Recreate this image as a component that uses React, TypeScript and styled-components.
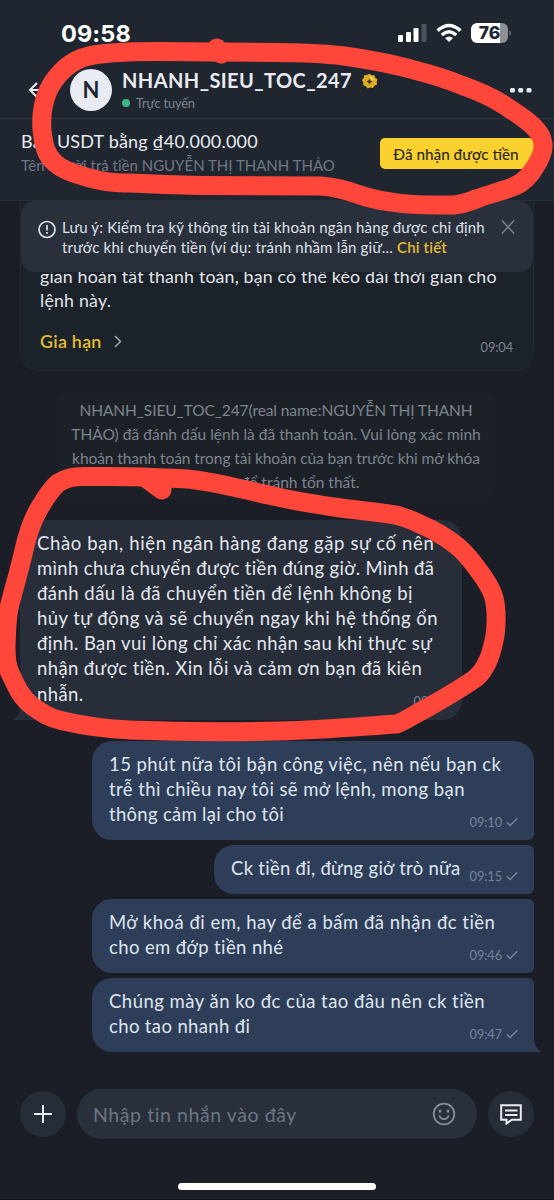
import React from "react";
import styled, { createGlobalStyle } from "styled-components";

const GlobalStyle = createGlobalStyle`
  * { box-sizing: border-box; }
  body {
    margin: 0;
    background: #1b1e26;
    font-family: Lato, "Noto Sans", "Liberation Sans", sans-serif;
    font-variant-ligatures: none;
    -webkit-font-smoothing: antialiased;
  }
`;

const Screen = styled.div`
  position: relative;
  display: flex;
  flex-direction: column;
  width: 554px;
  height: 1200px;
  overflow: hidden;
  background: #1b1e26;
  border-bottom: 1px solid #120f16;
`;

const StatusBar = styled.div`
  display: flex;
  justify-content: space-between;
  align-items: center;
  height: 60px;
  padding: 7px 42px 0 61px;
  background: #1f2630;
`;

const Clock = styled.div`
  font: 700 23.5px/28px Inter, sans-serif;
  letter-spacing: 0.1px;
  color: #fff;
`;

const StatusIcons = styled.div`
  display: flex;
  align-items: center;
  gap: 9px;
  margin-bottom: 2px;
`;

const Header = styled.header`
  display: flex;
  align-items: center;
  height: 59px;
  padding: 1px 22px 0 28px;
  background: #1f2630;
  border-bottom: 1px solid #2d343f;
`;

const Avatar = styled.div`
  display: grid;
  place-items: center;
  width: 42px;
  height: 42px;
  margin-left: 25px;
  border-radius: 50%;
  background: #e9ebf3;
  color: #20262f;
  font-size: 22px;
  font-weight: 700;
`;

const Person = styled.div`
  flex: 1;
  padding-left: 10px;
`;

const NameRow = styled.div`
  display: flex;
  align-items: center;
  gap: 9px;
  height: 26px;
  font-size: 20px;
  font-weight: 700;
  color: #e9ebf1;
`;

const VerifiedBadge = styled.svg`
  margin-top: 2px;
`;

const Presence = styled.div`
  display: flex;
  align-items: center;
  gap: 6px;
  height: 19px;
  font-size: 12.8px;
  letter-spacing: -0.15px;
  color: #7e8592;
  &::before {
    content: "";
    width: 8px;
    height: 8px;
    border-radius: 50%;
    background: #3cb586;
  }
`;

const OrderBar = styled.section`
  display: flex;
  justify-content: space-between;
  align-items: flex-start;
  height: 82px;
  padding: 10px 20px 0 21px;
  background: #1f2630;
  border-bottom: 1px solid #25303a;
`;

const OrderTitle = styled.div`
  font-size: 18px;
  line-height: 24px;
  color: #e9ebf1;
`;

const OrderNote = styled.div`
  font-size: 15px;
  line-height: 24px;
  color: #707785;
`;

const ConfirmButton = styled.button`
  width: 154px;
  height: 31px;
  margin-top: 9px;
  padding: 0 2px 0 0;
  border: 0;
  border-radius: 5px;
  background: #fbd12f;
  color: #2b2a25;
  font-family: inherit;
  font-size: 15.3px;
  font-weight: 500;
`;

const Chat = styled.main`
  position: relative;
  flex: 1;
  display: flex;
  flex-direction: column;
  align-items: flex-start;
  padding: 0 20px;
`;

const Notice = styled.aside`
  position: absolute;
  z-index: 1;
  top: 0;
  left: 21px;
  display: flex;
  width: 512px;
  height: 71px;
  padding: 16px 18px 0 17px;
  border-radius: 14px;
  background: #29303c;
  color: #dfe2ea;
  font-size: 15px;
  line-height: 20px;
`;

const NoticeBody = styled.div`
  flex: 1;
  min-width: 0;
  padding-left: 6px;
`;

const Accent = styled.span`
  color: #e5bd2f;
  font-weight: 600;
`;

const Line = styled.div<{ $track?: number }>`
  white-space: nowrap;
  letter-spacing: ${(p) => p.$track ?? 0}px;
`;

const ReminderCard = styled.article`
  display: flex;
  flex-direction: column;
  width: 514px;
  height: 170px;
  padding: 63px 20px 0 19px;
  border: 1px solid #222932;
  border-top: 0;
  border-radius: 0 0 20px 20px;
  background: #1c2229;
  color: #e1e4eb;
  font-size: 17.8px;
  line-height: 24px;
`;

const CardFooter = styled.div`
  display: flex;
  justify-content: space-between;
  align-items: flex-end;
  margin-top: 17px;
`;

const ExtendLink = styled.span`
  display: flex;
  align-items: center;
  gap: 12px;
  font-weight: 600;
  color: #e5bd2f;
`;

const Time = styled.span`
  font-size: 12.8px;
  line-height: 16px;
  letter-spacing: -0.1px;
  color: #7c838f;
`;

const CardTime = styled(Time)`
  margin-bottom: -2px;
`;

const SystemNote = styled.div`
  width: 440px;
  height: 107px;
  margin: 21px 0 0 36px;
  padding-top: 6px;
  border-radius: 14px;
  background: #1c2128;
  color: #7d838d;
  font-size: 15.5px;
  line-height: 24px;
  text-align: center;
`;

const Bubble = styled.article<{ $mine?: boolean; $w: number; $h: number; $gap: number; $radius: string }>`
  position: relative;
  display: flex;
  justify-content: space-between;
  align-items: flex-end;
  align-self: ${(p) => (p.$mine ? "flex-end" : "flex-start")};
  width: ${(p) => p.$w}px;
  height: ${(p) => p.$h}px;
  margin-top: ${(p) => p.$gap}px;
  padding: 0 16px 11px 17px;
  border-radius: ${(p) => p.$radius};
  background: ${(p) => (p.$mine ? "#2e3e59" : "#272e39")};
  color: ${(p) => (p.$mine ? "#dfe5f0" : "#e3e6ed")};
  font-size: 18.5px;
  line-height: 25.1px;
`;

const BubbleText = styled.div`
  flex: 1;
  min-width: 0;
  align-self: flex-start;
  padding-top: 11px;
`;

const Stamp = styled(Time)`
  display: flex;
  align-items: center;
  gap: 4px;
  margin-bottom: -1px;
  color: #76829a;
`;

const Tail = styled.svg<{ $mine?: boolean }>`
  position: absolute;
  bottom: 0;
  ${(p) => (p.$mine ? "right: -7px;" : "left: -7px; transform: scaleX(-1);")}
`;

const Composer = styled.footer`
  display: flex;
  align-items: center;
  gap: 11px;
  height: 50px;
  margin-bottom: 44px;
  padding: 0 20px;
`;

const RoundButton = styled.button`
  display: grid;
  place-items: center;
  width: 46px;
  height: 46px;
  padding: 0;
  border: 0;
  border-radius: 50%;
  background: #262d38;
`;

const Field = styled.div`
  display: flex;
  justify-content: space-between;
  align-items: center;
  flex: 1;
  height: 50px;
  padding: 0 21px 0 16px;
  border-radius: 25px;
  background: #29303c;
  color: #6d7483;
  font-size: 19.5px;
`;

const HomeIndicator = styled.div`
  width: 198px;
  height: 7px;
  margin: 0 0 9px 178px;
  border-radius: 4px;
  background: #fff;
`;

const Marker = styled.svg`
  position: absolute;
  inset: 0;
  z-index: 2;
  pointer-events: none;
`;

const Check = () => (
  <svg width="12" height="10" viewBox="0 0 12 10" fill="none" stroke="#76829a" strokeWidth="1.5">
    <path d="M.8 5.2l3.3 3.3L11.300 1.200" />
  </svg>
);

type TextLine = [string, number];

const incoming: TextLine[] = [
  ["Chào bạn, hiện ngân hàng đang gặp sự cố nên", 0.63],
  ["mình chưa chuyển được tiền đúng giờ. Mình đã", 0.34],
  ["đánh dấu là đã chuyển tiền để lệnh không bị", 0.47],
  ["hủy tự động và sẽ chuyển ngay khi hệ thống ổn", 0.45],
  ["định. Bạn vui lòng chỉ xác nhận sau khi thực sự", 0.39],
  ["nhận được tiền. Xin lỗi và cảm ơn bạn đã kiên", 0.39],
  ["nhẫn.", 0.4],
];

const outgoing: { lines: TextLine[]; time: string; w: number; h: number; gap: number; radius: string; tail?: boolean }[] = [
  {
    lines: [
      ["15 phút nữa tôi bận công việc, nên nếu bạn ck", 0.42],
      ["trễ thì chiều nay tôi sẽ mở lệnh, mong bạn", 0.41],
      ["thông cảm lại cho tôi", 0.3],
    ],
    time: "09:10", w: 442, h: 99, gap: 21, radius: "20px 20px 6px 20px",
  },
  { lines: [["Ck tiền đi, đừng giở trò nữa", 0.27]], time: "09:15", w: 320, h: 49, gap: 5, radius: "20px 6px 6px 20px" },
  {
    lines: [["Mở khoá đi em, hay để a bấm đã nhận đc tiền", 0.48], ["cho em đớp tiền nhé", 0.38]],
    time: "09:46", w: 442, h: 74, gap: 5, radius: "20px 6px 6px 20px",
  },
  {
    lines: [["Chúng mày ăn ko đc của tao đâu nên ck tiền", 0.48], ["cho tao nhanh đi", 0.37]],
    time: "09:47", w: 442, h: 74, gap: 5, radius: "20px 6px 0 20px", tail: true,
  },
];

const Lines = ({ items }: { items: TextLine[] }) => (
  <>
    {items.map(([text, track]) => (
      <Line key={text} $track={track}>{text}</Line>
    ))}
  </>
);

export default function App() {
  return (
    <Screen>
      <GlobalStyle />
      <StatusBar>
        <Clock>09:58</Clock>
        <StatusIcons>
          <svg width="29" height="20" viewBox="0 0 29 20" fill="#fff">
            <rect x="0" y="12" width="5" height="7" rx="1.2" />
            <rect x="8" y="9" width="5" height="10" rx="1.2" />
            <rect x="15.5" y="5" width="5" height="14" rx="1.2" />
            <rect x="23.5" y="1" width="5" height="18" rx="1.2" fill="#4b525c" />
          </svg>
          <svg width="26" height="20" viewBox="0 0 26 20" fill="none" stroke="#fff" strokeWidth="3.5">
            <path d="M1.6 7.6Q13-2.6 24.4 7.6" />
            <path d="M5.8 12Q13 5.6 20.2 12" />
            <path d="M9 15Q13 11.8 17 15L13 19z" fill="#fff" stroke="none" />
          </svg>
          <svg width="41" height="20" viewBox="0 0 41 20">
            <path d="M6 0h23v20H6a6 6 0 0 1-6-6V6a6 6 0 0 1 6-6z" fill="#fff" />
            <path d="M29 0h2a6 6 0 0 1 6 6v8a6 6 0 0 1-6 6h-2z" fill="#8e9196" />
            <path d="M38.5 7q2.5 3 0 6z" fill="#8e9196" />
            <text x="18.5" y="16" textAnchor="middle" fontFamily="Inter" fontWeight="800" fontSize="17.5" fill="#20262f">76</text>
          </svg>
        </StatusIcons>
      </StatusBar>

      <Header>
        <svg width="17" height="16" viewBox="0 0 17 16" fill="none" stroke="#e9ebf1" strokeWidth="2">
          <path d="M9 1L2 8l7 7M2 8h15" />
        </svg>
        <Avatar>N</Avatar>
        <Person>
          <NameRow>
            <Line $track={0.42}>NHANH_SIEU_TOC_247</Line>
            <VerifiedBadge width="17" height="17" viewBox="0 0 18 18">
              <path d="M9 .8l2.3 1.7 2.9-.2.9 2.7 2.3 1.7-.8 2.8.4 2.8-2.7 1.2-1.6 2.4-2.9-.6-2.8 1-1.9-2.2-2.8-1 .2-2.9L1 7.500l1.900-2.200.4-2.900 2.900-.3z" fill="#dfab22" />
              <path d="M9 2.500l3 1.500 2.500 3-5.500 2z" fill="#f5cf4a" />
              <path d="M9 5.500l1 2.500 2.500 1-2.500 1-1 2.500-1-2.500-2.500-1L8 8z" fill="#3d3010" />
            </VerifiedBadge>
          </NameRow>
          <Presence>Trực tuyến</Presence>
        </Person>
        <svg width="22" height="6" viewBox="0 0 22 6" fill="#e9ebf1">
          <rect x="0" y="1" width="5" height="4.500" rx="1.500" />
          <rect x="8.200" y="1" width="5" height="4.500" rx="1.500" />
          <rect x="16.500" y="1" width="5" height="4.500" rx="1.500" />
        </svg>
      </Header>

      <OrderBar>
        <div>
          <OrderTitle><Line $track={0.2}>Bán USDT bằng ₫40.000.000</Line></OrderTitle>
          <OrderNote><Line>Tên người trả tiền NGUYỄN THỊ THANH THẢO</Line></OrderNote>
        </div>
        <ConfirmButton>Đã nhận được tiền</ConfirmButton>
      </OrderBar>

      <Chat>
        <Notice>
          <svg width="18" height="24" viewBox="0 0 18 24" fill="none" stroke="#dfe2ea" strokeWidth="1.700">
            <circle cx="9" cy="12.500" r="8" />
            <path d="M9 8v5.500M9 15v1.800" />
          </svg>
          <NoticeBody>
            <Line $track={0.18}>Lưu ý: Kiểm tra kỹ thông tin tài khoản ngân hàng được chỉ định</Line>
            <Line $track={0.19}>trước khi chuyển tiền (ví dụ: tránh nhầm lẫn giữ... <Accent>Chi tiết</Accent></Line>
          </NoticeBody>
          <svg width="14" height="20" viewBox="0 0 14 20" fill="none" stroke="#79808c" strokeWidth="1.500">
            <path d="M1 3.500l12 13M13 3.500L1 16.500" />
          </svg>
        </Notice>

        <ReminderCard>
          <Line $track={0.16}>gian hoàn tất thanh toán, bạn có thể kéo dài thời gian cho</Line>
          <Line $track={0.2}>lệnh này.</Line>
          <CardFooter>
            <ExtendLink>
              <Line $track={0.3}>Gia hạn</Line>
              <svg width="8" height="13" viewBox="0 0 8 13" fill="none" stroke="#9ba1ab" strokeWidth="1.600">
                <path d="M1 1l5.500 5.500L1 12" />
              </svg>
            </ExtendLink>
            <CardTime>09:04</CardTime>
          </CardFooter>
        </ReminderCard>

        <SystemNote>
          <Line $track={-0.09}>NHANH_SIEU_TOC_247(real name:NGUYỄN THỊ THANH</Line>
          <Line $track={0.03}>THẢO) đã đánh dấu lệnh là đã thanh toán. Vui lòng xác minh</Line>
          <Line $track={-0.07}>khoản thanh toán trong tài khoản của bạn trước khi mở khóa</Line>
          <Line>crypto để tránh tổn thất.</Line>
        </SystemNote>

        <Bubble $w={442} $h={200} $gap={21} $radius="20px 20px 20px 0">
          <BubbleText><Lines items={incoming} /></BubbleText>
          <Time>09:05</Time>
          <Tail width="14" height="14" viewBox="0 0 14 14"><path d="M0 0h7q0 9 7 14H0z" fill="#272e39" /></Tail>
        </Bubble>

        {outgoing.map((m) => (
          <Bubble key={m.time} $mine $w={m.w} $h={m.h} $gap={m.gap} $radius={m.radius}>
            <BubbleText><Lines items={m.lines} /></BubbleText>
            <Stamp>{m.time}<Check /></Stamp>
            {m.tail && (
              <Tail $mine width="14" height="14" viewBox="0 0 14 14"><path d="M0 0h7q0 9 7 14H0z" fill="#2e3e59" /></Tail>
            )}
          </Bubble>
        ))}
      </Chat>

      <Composer>
        <RoundButton>
          <svg width="18" height="18" viewBox="0 0 18 18" stroke="#e9ebf1" strokeWidth="2"><path d="M9 0v18M0 9h18" /></svg>
        </RoundButton>
        <Field>
          <Line $track={0.58}>Nhập tin nhắn vào đây</Line>
          <svg width="24" height="24" viewBox="0 0 24 24" fill="none" stroke="#858b98" strokeWidth="1.800">
            <circle cx="12" cy="12" r="10.300" />
            <path d="M7.300 13.500a4.900 4.900 0 0 0 9.400 0" />
            <path d="M8 7.800v2.800M16 7.800v2.800" strokeWidth="2.600" />
          </svg>
        </Field>
        <RoundButton>
          <svg width="22" height="21" viewBox="0 0 22 21" fill="none" stroke="#e9ebf1" strokeWidth="2">
            <path d="M1.200 1.200h19.600v14.600h-9L6.500 19.600v-3.800H1.200zM5 6.500h12.500M5 11h12.500" />
          </svg>
        </RoundButton>
      </Composer>
      <HomeIndicator />

      <Marker width="554" height="1200" viewBox="0 0 554 1200" fill="none" stroke="#ff463a" strokeWidth="19" strokeLinecap="round" strokeLinejoin="round">
        <path d="M220 52C190 52 155 51 128 52C105 53 93 54 82 58C66 64 54 78 48 91C42 105 41 117 42 130C44 147 46 155 55 163C63 170 71 173 83 176C99 181 110 183 130 183C150 184 175 185 200 185.500L320 186C336 187 346 190 357 194C368 198 376 200 391 202C415 206 440 205 454 205C465 204 468 202 476 199C487 195 495 193 507 189C519 185 525 181 531 173C539 162 544 152 543 144C542 137 541 135 534 127C526 119 516 113 504 105C492 97 478 91 461 85C444 78 430 74 414 70C390 63 365 59 344 56C320 53 300 52.500 274 52.500Z" />
        <path d="M217 48L221 54" />
        <path d="M143 477C125 476 100 476.500 84 476.500C72 476.500 67 478 58 483C50 490 45 499 40 507C34 517 28 532 24 550C20 568 14 588 10 604C6 620 7 630 6 645C6 660 7 668 12 677C17 688 21 697 32 706C42 713 49 718 63 721C85 726 105 729 130 730C180 732 240 732 280 731C325 730 365 726 397 724C403 722 415 714 427 708C441 700 460 689 473 680C485 672 490 658 493 645C497 630 497 610 494 598C492 590 488 584 484 578C475 565 466 553 457 546C447 538 434 530 422 525C410 519 400 515 389 514C370 511 355 510 341 508C320 505 300 502 280 497.500C262 494 250 490.500 233 487C215 483 200 480 187 479C175 478 160 478 143 477" />
        <path d="M147 479L162 490" />
      </Marker>
    </Screen>
  );
}
